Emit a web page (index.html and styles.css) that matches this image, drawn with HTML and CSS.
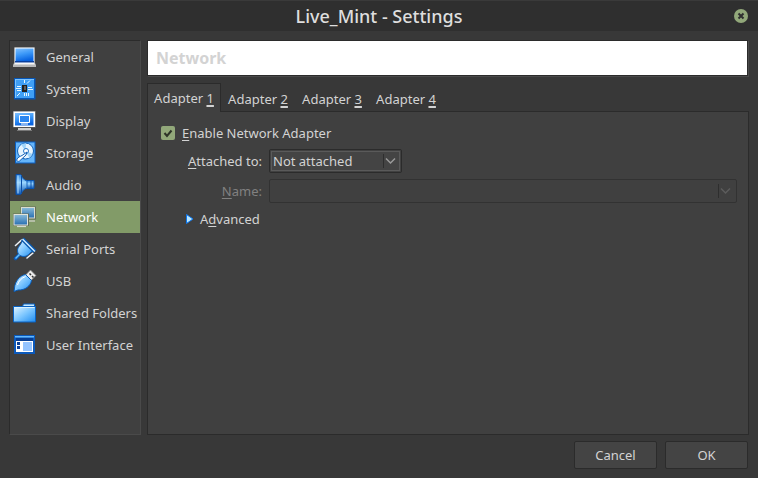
FILE: index.html
```html
<!DOCTYPE html>
<html lang="en">
<head>
<meta charset="utf-8">
<title>Live_Mint - Settings</title>
<link rel="stylesheet" href="styles.css">
</head>
<body>
<svg class="defs" aria-hidden="true">
  <defs>
    <linearGradient id="screen" x1="0" y1="0" x2="0.3" y2="1"><stop offset="0" stop-color="#7fc0ff"/><stop offset="0.5" stop-color="#3b98f8"/><stop offset="1" stop-color="#0863e0"/></linearGradient>
    <linearGradient id="sky" x1="0" y1="0" x2="1" y2="1"><stop offset="0" stop-color="#e2f5ff"/><stop offset="0.5" stop-color="#7cc6ff"/><stop offset="1" stop-color="#1f8cf0"/></linearGradient>
    <linearGradient id="cone" x1="0" y1="0" x2="0" y2="1"><stop offset="0" stop-color="#2c82dc"/><stop offset="0.4" stop-color="#9bd6ff"/><stop offset="1" stop-color="#0c55b4"/></linearGradient>
    <linearGradient id="steel" x1="0" y1="0" x2="0" y2="1"><stop offset="0" stop-color="#86b8d8"/><stop offset="1" stop-color="#2c72b4"/></linearGradient>
  </defs>
</svg>
<header class="titlebar">
  <h1>Live_Mint - Settings</h1>
  <button class="close" aria-label="Close"><svg viewBox="0 0 14 14"><path d="M4.500 4.500l5 5M9.500 4.500l-5 5" stroke="#2f2f2f" stroke-width="2"/></svg></button>
</header>
<div class="content">
  <nav class="sidebar">
    <a href="#general"><svg viewBox="0 0 24 24"><path d="M1 2h21v16H1z" fill="#555"/><path d="M1.500 2.500h20V18h-20z" fill="#fff"/><path d="M2.500 3.500h18V16.500h-18z" fill="url(#screen)"/><path d="M2 16h19v1.500H2z" fill="#0a3f9c"/><path d="M1 18h21l1 2v2H0v-2z" fill="#b8b8b8"/><path d="M2 18h19l1 1.500H1z" fill="#f8f8f8"/></svg>General</a>
    <a href="#system"><svg viewBox="0 0 24 24"><path d="M1 1h21.500v21.500H1z" fill="#0757b8"/><path d="M2 2h19v19H2z" fill="#7cc3ff"/><path d="M3 3h18v18H3z" fill="#3f9ff6"/><path d="M4 9.500h4M3 11.500h5M4 13.500h4M15 10.500h4M15 12.500h5M11.500 3v3M14 6.500l3-3M4 19l3-3M11.500 16v3M13.500 16v3M15.500 16v3" stroke="#e6f6ff"/><path d="M9 8h5v7H9z" fill="#222"/><path d="M11 9h2v4h-2z" fill="#5c5c5c"/></svg>System</a>
    <a href="#display"><svg viewBox="0 0 24 24"><path d="M0 2h23v16.500H0z" fill="#666"/><path d="M.5 2.500h21.500V18H.5z" fill="#fff"/><path d="M2 4h18.500v12.500H2z" fill="url(#screen)"/><path d="M6.500 6.500h10v7h-10z" fill="#2b86f0" stroke="#fff"/><path d="M8 15h7" stroke="#fff" stroke-width="1"/><path d="M5 20h13" stroke="#fff" stroke-width="1.500"/><path d="M4 21.500h15" stroke="#777"/></svg>Display</a>
    <a href="#storage"><svg viewBox="0 0 24 24"><path d="M2 .5h20.500v22H2z" fill="#0a5fc2"/><path d="M3 1.500h18.500v20H3z" fill="#65b5fa"/><circle cx="12.500" cy="10" r="8" fill="#e4f4ff" stroke="#1262b8"/><path d="M12.500 10L8 3.500a8 8 0 0 1 5-1zM12.500 10l7 3-3 4z" fill="#9fd4fa"/><circle cx="13" cy="10" r="2.500" fill="#fff" stroke="#2a78c8"/><path d="M14 11l-1 3-6.500 6c-1.500 1-3.500 0-2.500-2 1-1.800 3-2.500 5-3.500z" fill="#fff" stroke="#1262b8"/></svg>Storage</a>
    <a href="#audio"><svg viewBox="0 0 24 24"><path d="M13 7.500h8v8h-8z" fill="url(#cone)" stroke="#0b53ad"/><path d="M8 2c1 3 3 5 6 6v7c-3 1-5 3-6 6z" fill="url(#cone)" stroke="#1664bd"/><path d="M3 1.500h4.500l1 1v18l-1 1H3z" fill="url(#cone)" stroke="#0b4ea6"/><path d="M5 2.500v18" stroke="#b5e0ff"/><path d="M18 8v7" stroke="#0b53ad"/></svg>Audio</a>
    <a href="#network" class="selected" aria-current="page"><svg viewBox="0 0 24 24"><path d="M7.500 1.500h15.500v13H7.500z" fill="#666e5c"/><path d="M8 2h14v11.500H8z" fill="#d7dccf"/><path d="M9 3h12v9.500H9z" fill="url(#steel)"/><path d="M15 16h7" stroke="#c4cabb" stroke-width="1.500"/><path d="M0 8.500h16v12.500H0z" fill="#626b58"/><path d="M.5 9h14.500v11.500H.5z" fill="#e0e3da"/><path d="M1.500 10h12.500v9.500H1.500z" fill="url(#steel)"/><path d="M4 21.500h9" stroke="#d6dacf" stroke-width="1.200"/></svg>Network</a>
    <a href="#serial"><svg viewBox="0 0 24 24"><path d="M2.500 8.500l6-5.500M14 21l6-5" stroke="#3c4650" stroke-width="3" stroke-linecap="round"/><path d="M2.500 21.500l4-4" stroke="#0b57b5" stroke-width="3.500" stroke-linecap="round"/><path d="M2.500 8.500l6-5.500M14 21l6-5" stroke="#f2f2f2" stroke-width="1.500" stroke-linecap="round"/><path d="M9.500 3.500L20 14c-2 1-3 2-4.500 3.500-2.500 2.500-6.500 2.500-9 .5s-2.500-6-.5-8.500C7.500 7.500 8.500 6 9.500 3.500z" fill="url(#sky)" stroke="#0960c0"/><path d="M9.500 2L22 14.500" stroke="#0757ad" stroke-width="4"/><path d="M9.500 2L22 14.500" stroke="#cfeaff" stroke-width="1.500"/><path d="M2.500 21.500l4-4" stroke="#65c2ff" stroke-width="1.500"/></svg>Serial Ports</a>
    <a href="#usb"><svg viewBox="0 0 24 24"><path d="M12.500 6L17.500 1l5.500 5.500-5 5z" fill="#ededed" stroke="#777" stroke-width=".8"/><path d="M16.500 4.500L18 6M19 7l1.500 1.500" stroke="#333" stroke-width="1.500"/><path d="M1 22.500l.5-3.500C2 12 7 6.500 12.500 5.500l6 6C17.500 17 12 21.500 5 21z" fill="url(#sky)" stroke="#075bb8"/><path d="M4.500 16c1-4 4-7 8-8.500" fill="none" stroke="#fff"/></svg>USB</a>
    <a href="#folders"><svg viewBox="0 0 24 24"><path d="M9.500 5.500l1-2.500h11v4h-12z" fill="#c9eaff" stroke="#0b66c8"/><path d="M.5 5.500h22V21H.5z" fill="url(#sky)" stroke="#0862c4"/><path d="M1.500 6.500h20" stroke="#d9f2ff"/></svg>Shared Folders</a>
    <a href="#interface"><svg viewBox="0 0 24 24"><path d="M1 2h21v19H1z" fill="#0b59bb"/><path d="M2 3h19v1.500H2z" fill="#63b9ff"/><path d="M3 5h17v3H3z" fill="#073d91"/><path d="M3 8h17v11H3z" fill="#fff"/><path d="M4 9h3v3H4zM4 13h3v3H4z" fill="#0c439b"/><path d="M10 9h9v9h-9z" fill="#94c4ff"/></svg>User Interface</a>
  </nav>
  <main>
    <h2>Network</h2>
    <div class="tabs" role="tablist">
      <button role="tab" aria-selected="true">Adapter <u>1</u></button>
      <button role="tab">Adapter <u>2</u></button>
      <button role="tab">Adapter <u>3</u></button>
      <button role="tab">Adapter <u>4</u></button>
    </div>
    <section class="pane" role="tabpanel">
      <label class="enable"><input type="checkbox" checked><svg class="tick" viewBox="0 0 14 14"><path d="M3.500 7l2.500 3 4.500-5.500" fill="none" stroke="#2d3327" stroke-width="2"/></svg><span><u>E</u>nable Network Adapter</span></label>
      <div class="fields">
        <label for="attached"><u>A</u>ttached to:</label>
        <div class="combo short">
          <select id="attached"><option>Not attached</option></select>
          <svg viewBox="0 0 20 16"><path d="M1.500 1v14" stroke="#2e2e2e"/><path d="M4 5.500l4.500 4.500L13 5.500" fill="none" stroke="#9a9a9a" stroke-width="1.500"/></svg>
        </div>
        <label for="name" class="off"><u>N</u>ame:</label>
        <div class="combo off">
          <select id="name" disabled></select>
          <svg viewBox="0 0 20 16"><path d="M1.500 1v14" stroke="#2e2e2e"/><path d="M4 5.500l4.500 4.500L13 5.500" fill="none" stroke="#5c5c5c" stroke-width="1.500"/></svg>
        </div>
      </div>
      <button class="advanced"><svg viewBox="0 0 8 10"><path d="M.5.500L7 5 .5 9.500z" fill="#b9e6ff" stroke="#0a76ee"/></svg><span>A<u>d</u>vanced</span></button>
    </section>
  </main>
</div>
<footer>
  <button>Cancel</button>
  <button>OK</button>
</footer>
</body>
</html>
```
FILE: styles.css
```css
* {
  box-sizing: border-box;
}

body {
  display: flex;
  flex-direction: column;
  min-height: 100vh;
  margin: 0;
  background: #383838;
  color: #d3d3d3;
  font: 13px/18px "Noto Sans", sans-serif;
}

button,
select {
  font: inherit;
  color: inherit;
}

u {
  text-underline-offset: 2px;
  text-decoration-thickness: 1px;
  text-decoration-skip-ink: none;
}

.defs {
  position: absolute;
  width: 0;
  height: 0;
}

.titlebar {
  display: grid;
  grid-template-columns: 1fr auto 1fr;
  align-items: center;
  height: 31px;
  padding: 0 10px;
  border-top: 1px solid #3a3a3a;
  background: #2f2f2f;
}

.titlebar h1 {
  grid-column: 2;
  margin: 0;
  color: #dedede;
  font-size: 18px;
  font-weight: 500;
  line-height: 24px;
}

.close {
  justify-self: end;
  width: 14px;
  height: 14px;
  padding: 0;
  border: 0;
  border-radius: 50%;
  background: #92a87a;
}

.close svg {
  display: block;
}

.content {
  display: flex;
  flex: 1;
  gap: 6px;
  padding: 9px 9px 0;
}

.sidebar {
  flex: 0 0 132px;
  border: 1px solid #4a4a4a;
  border-top-color: #2b2b2b;
  border-left-color: #2b2b2b;
  background: #404040;
}

.sidebar a {
  display: flex;
  align-items: center;
  gap: 9px;
  height: 32px;
  padding-left: 3px;
  color: inherit;
  text-decoration: none;
  white-space: nowrap;
}

.sidebar svg {
  flex: none;
  width: 24px;
  height: 24px;
}

.sidebar .selected {
  background: #829b68;
  color: #fff;
}

main {
  display: flex;
  flex: 1;
  flex-direction: column;
  min-width: 0;
}

h2 {
  height: 36px;
  margin: 0 1px 7px 0;
  padding: 0 8px;
  border: 1px solid #2b2b2b;
  background: #fff;
  box-shadow: 1px 1px #4a4a4a;
  color: #d3d3d3;
  font-size: 16px;
  font-weight: 700;
  line-height: 34px;
}

.tabs {
  display: flex;
  align-items: flex-end;
  margin-bottom: -1px;
}

.tabs button {
  width: 74px;
  height: 28px;
  padding: 2px 0 0;
  border: 0;
  background: none;
  white-space: nowrap;
}

.tabs u {
  text-decoration-thickness: 2px;
}

.tabs [aria-selected] {
  position: relative;
  height: 29px;
  padding: 0 0 1px;
  border: 1px solid #2b2b2b;
  border-bottom: 0;
  background: #404040;
}

.pane {
  flex: 1;
  padding: 12px 11px 12px 13px;
  border: 1px solid #2b2b2b;
  background: #404040;
}

.enable {
  display: flex;
  position: relative;
  align-items: center;
  gap: 7px;
  width: max-content;
}

.enable input {
  width: 14px;
  height: 14px;
  margin: 0;
  border-radius: 2px;
  background: #92a87a;
  appearance: none;
}

.tick {
  position: absolute;
  left: 0;
  width: 14px;
  height: 14px;
}

.fields {
  display: grid;
  grid-template-columns: 101px 1fr;
  gap: 6px 7px;
  align-items: center;
  margin-top: 7px;
}

.fields label {
  text-align: right;
}

.off {
  color: #808080;
}

.combo {
  position: relative;
  height: 24px;
}

.short {
  width: 133px;
}

.combo select {
  width: 100%;
  height: 100%;
  padding: 0 22px 0 3px;
  border: 1px solid #2b2b2b;
  border-radius: 2px;
  background: #444;
  box-shadow: inset 0 0 0 1px #414141, inset 0 0 0 2px #5a5a5a;
  appearance: none;
}

.combo select:disabled {
  border-color: #323232;
  background: #404040;
  box-shadow: none;
  opacity: 1;
}

.combo svg {
  position: absolute;
  top: 4px;
  right: 0;
  width: 20px;
  height: 16px;
  pointer-events: none;
}

.advanced {
  display: flex;
  align-items: center;
  gap: 6px;
  margin: 7px 0 0 25px;
  padding: 0;
  border: 0;
  background: none;
}

.advanced svg {
  width: 8px;
  height: 10px;
}

footer {
  display: flex;
  justify-content: flex-end;
  gap: 8px;
  padding: 6px 10px 9px;
}

footer button {
  width: 83px;
  height: 28px;
  padding: 0;
  border: 1px solid #2b2b2b;
  border-radius: 2px;
  background: #444;
}
```
